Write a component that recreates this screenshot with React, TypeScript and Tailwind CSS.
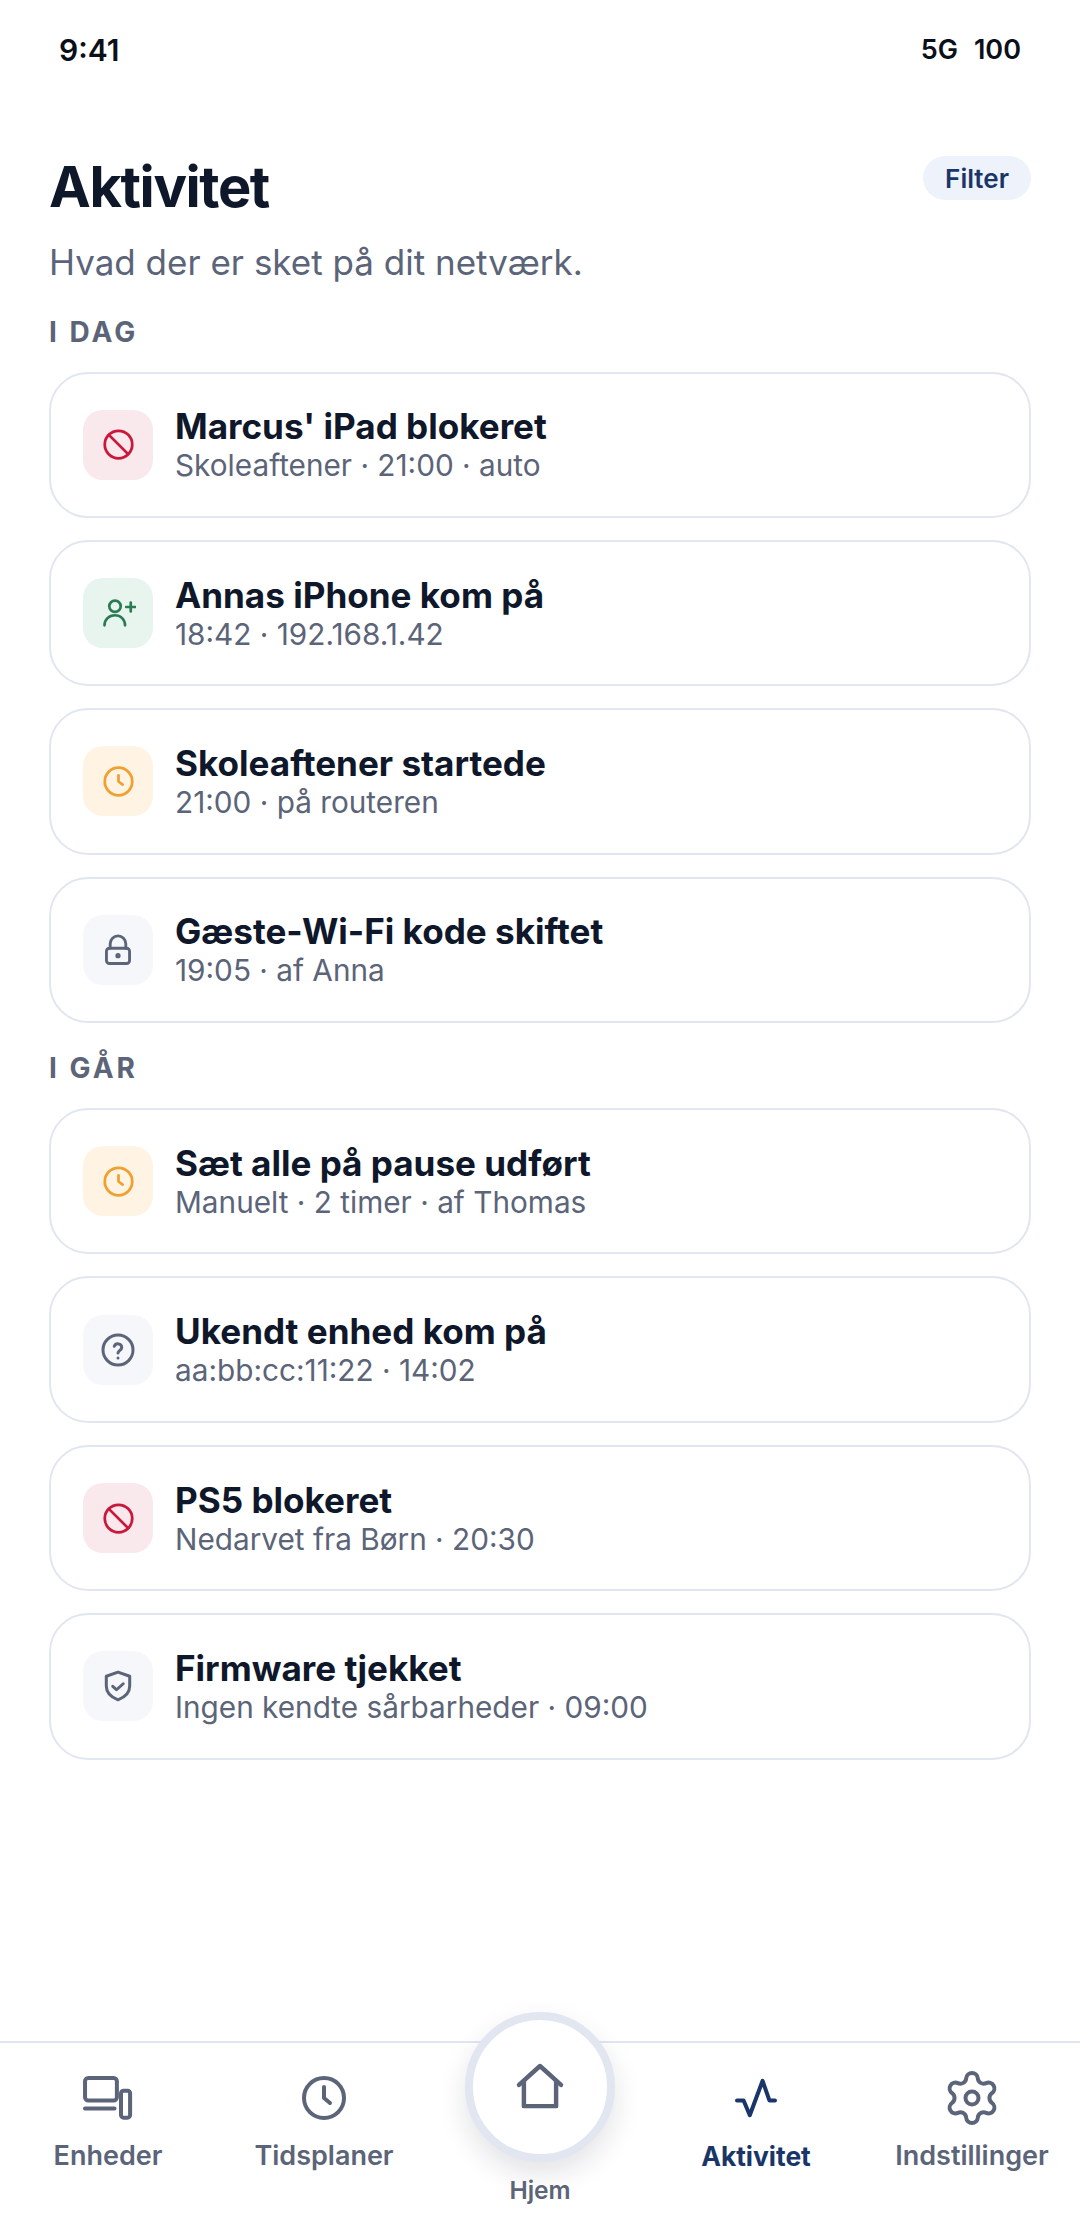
import type { ReactNode } from "react";

type Tone = "red" | "green" | "amber" | "gray";

const tones: Record<Tone, string> = {
  red: "bg-[#f9e8ec] text-[#c8193c]",
  green: "bg-[#e8f4ee] text-[#2a7a52]",
  amber: "bg-[#fff4e3] text-[#f0a030]",
  gray: "bg-[#f5f7fb] text-[#5b6478]",
};

function Svg({ size, sw = 2, children }: { size: number; sw?: number; children: ReactNode }) {
  return (
    <svg
      width={size}
      height={size}
      viewBox="0 0 24 24"
      fill="none"
      stroke="currentColor"
      strokeWidth={sw}
      strokeLinecap="round"
      strokeLinejoin="round"
    >
      {children}
    </svg>
  );
}

const BanIcon = (
  <Svg size={33}>
    <circle cx="12" cy="12" r="10" />
    <path d="M5 5l14 14" />
  </Svg>
);

const PersonPlusIcon = (
  <Svg size={36} sw={1.800}>
    <circle cx="10" cy="7.500" r="3.800" />
    <path d="M3 20.200c0-3.800 3-6.700 6.900-6.700s6.800 2.900 6.800 6.700" />
    <path d="M20.500 5v6M17.500 8h6" />
  </Svg>
);

const ClockIcon = (
  <Svg size={33}>
    <circle cx="12" cy="12" r="10" />
    <path d="M12 7.500V12l3 2.200" />
  </Svg>
);

const LockIcon = (
  <Svg size={36} sw={1.900}>
    <rect x="4.300" y="10.800" width="15.400" height="10.200" rx="2" />
    <path d="M6.800 10.800V7.800a5.200 5.200 0 0 1 10.400 0v3" />
    <circle cx="12" cy="15.800" r="0.800" />
  </Svg>
);

const HelpIcon = (
  <Svg size={36}>
    <circle cx="12" cy="12" r="10" />
    <path d="M9.500 9.500a2.600 2.600 0 0 1 5 .8c0 1.700-2.500 2.200-2.500 3.700" />
    <path d="M12 17.300h.01" />
  </Svg>
);

const ShieldIcon = (
  <Svg size={36}>
    <path d="M12 2.800l7.800 2.700v6.500c0 4.400-3.300 7.500-7.800 9.200-4.500-1.700-7.800-4.800-7.800-9.200V5.500z" />
    <path d="M8.500 12.200l2.500 2.300 4.500-4" />
  </Svg>
);

type Row = { icon: ReactNode; tone: Tone; title: string; sub: string };

const today: Row[] = [
  { icon: BanIcon, tone: "red", title: "Marcus' iPad blokeret", sub: "Skoleaftener · 21:00 · auto" },
  { icon: PersonPlusIcon, tone: "green", title: "Annas iPhone kom på", sub: "18:42 · 192.168.1.42" },
  { icon: ClockIcon, tone: "amber", title: "Skoleaftener startede", sub: "21:00 · på routeren" },
  { icon: LockIcon, tone: "gray", title: "Gæste-Wi-Fi kode skiftet", sub: "19:05 · af Anna" },
];

const yesterday: Row[] = [
  { icon: ClockIcon, tone: "amber", title: "Sæt alle på pause udført", sub: "Manuelt · 2 timer · af Thomas" },
  { icon: HelpIcon, tone: "gray", title: "Ukendt enhed kom på", sub: "aa:bb:cc:11:22 · 14:02" },
  { icon: BanIcon, tone: "red", title: "PS5 blokeret", sub: "Nedarvet fra Børn · 20:30" },
  { icon: ShieldIcon, tone: "gray", title: "Firmware tjekket", sub: "Ingen kendte sårbarheder · 09:00" },
];

function ActivityCard({ row }: { row: Row }) {
  return (
    <div className="flex h-[146.4px] items-center gap-[22px] rounded-[39px] border-2 border-[#e2e6f0] bg-white pl-[32px]">
      <div className={`flex h-[70px] w-[70px] items-center justify-center rounded-[20px] ${tones[row.tone]}`}>
        {row.icon}
      </div>
      <div className="flex flex-col">
        <div className="text-[35.100px] leading-[41px] font-bold text-[#0f172a]">{row.title}</div>
        <div className="text-[29.750px] leading-[36px] text-[#5b6478]">{row.sub}</div>
      </div>
    </div>
  );
}

function NavItem({ label, active, children }: { label: string; active?: boolean; children: ReactNode }) {
  return (
    <div className={`flex w-[216px] flex-col items-center ${active ? "text-[#1a3668]" : "text-[#5b6478]"}`}>
      <div className="flex h-[60px] items-center justify-center">{children}</div>
      <div className={`mt-[12px] leading-[32px] ${active ? "text-[26.400px] font-bold" : "text-[27px] font-semibold"}`}>
        {label}
      </div>
    </div>
  );
}

export default function App() {
  return (
    <div className="relative flex h-[2214px] w-[1080px] flex-col overflow-hidden bg-white font-['Inter',sans-serif]">
      <div className="flex h-[100px] items-center justify-between px-[59px] text-[30px] font-semibold text-[#0b0f1a]">
        <span>9:41</span>
        <span className="flex gap-[16px] text-[27px]">
          <span>5G</span>
          <span>100</span>
        </span>
      </div>

      <div className="flex-1 px-[49px]">
        <div className="mt-[56px] flex items-start justify-between">
          <h1 className="text-[56px] leading-[62px] font-bold tracking-[-1.400px] text-[#0f172a]">Aktivitet</h1>
          <span className="flex h-[44px] items-center rounded-full bg-[#eef2fa] px-[22px] text-[26px] font-semibold text-[#1a3668]">
            Filter
          </span>
        </div>
        <p className="mt-[23px] text-[35px] leading-[42px] text-[#5b6478]">Hvad der er sket på dit netværk.</p>
        <div className="mt-[32px] text-[28px] leading-[34px] font-bold tracking-[3px] text-[#5b6478]">I DAG</div>
        <div className="mt-[22.500px] flex flex-col gap-[22px]">
          {today.map((row) => (
            <ActivityCard key={row.title} row={row} />
          ))}
        </div>
        <div className="mt-[28px] text-[28px] leading-[34px] font-bold tracking-[3px] text-[#5b6478]">I GÅR</div>
        <div className="mt-[23px] flex flex-col gap-[22px]">
          {yesterday.map((row) => (
            <ActivityCard key={row.title} row={row} />
          ))}
        </div>
      </div>

      <nav className="flex h-[173px] items-start border-t-2 border-[#e2e6f0] bg-white pt-[25px]">
        <NavItem label="Enheder">
          <Svg size={52} sw={1.850}>
            <rect x="1.400" y="2.800" width="14.700" height="10.400" rx="1.500" />
            <path d="M1.400 16.800H15" />
            <rect x="18" y="8.600" width="4.200" height="12.500" rx="1.200" />
          </Svg>
        </NavItem>
        <NavItem label="Tidsplaner">
          <Svg size={48}>
            <circle cx="12" cy="12" r="10" />
            <path d="M12 6.500V12l3 2.500" />
          </Svg>
        </NavItem>
        <div className="w-[216px]" />
        <NavItem label="Aktivitet" active>
          <Svg size={48}>
            <path d="M2.500 13.200H5.800L8.900 20.600L15.300 3.400L18.700 13.200H21.500" />
          </Svg>
        </NavItem>
        <NavItem label="Indstillinger">
          <Svg size={60} sw={1.600}>
            <circle cx="12" cy="12" r="2.600" />
            <path d="M9.671 4.136a2.34 2.34 0 0 1 4.659 0 2.34 2.34 0 0 0 3.319 1.915 2.34 2.34 0 0 1 2.33 4.033 2.34 2.34 0 0 0 0 3.831 2.34 2.34 0 0 1-2.33 4.033 2.34 2.34 0 0 0-3.319 1.915 2.34 2.34 0 0 1-4.659 0 2.34 2.34 0 0 0-3.32-1.915 2.34 2.34 0 0 1-2.33-4.033 2.34 2.34 0 0 0 0-3.831A2.34 2.34 0 0 1 6.35 6.051a2.34 2.34 0 0 0 3.319-1.915" />
          </Svg>
        </NavItem>
      </nav>

      <div className="absolute bottom-[9px] left-[465px] flex w-[150px] flex-col items-center text-[#5b6478]">
        <div className="flex h-[150px] w-[150px] items-center justify-center rounded-full border-[8px] border-[#e2e6f0] bg-white shadow-[0_12px_28px_rgba(15,23,42,0.12)]">
          <Svg size={56} sw={1.900}>
            <path d="M3 11.100L12 3l9 8.100" />
            <path d="M5.100 9.400V20.200H18.900V9.400" />
          </Svg>
        </div>
        <div className="mt-[13px] text-[24.500px] leading-[30px] font-semibold">Hjem</div>
      </div>
    </div>
  );
}
